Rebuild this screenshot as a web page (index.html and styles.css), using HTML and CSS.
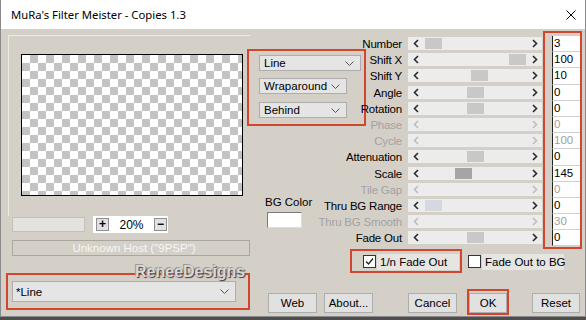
FILE: index.html
```html
<!DOCTYPE html>
<html>
<head>
<meta charset="utf-8">
<link rel="stylesheet" href="styles.css">
</head>
<body>
<div class="window">
  <div class="titlebar">
    <span class="title">MuRa's Filter Meister - Copies 1.3</span>
    <svg class="close" viewBox="0 0 10 10"><path d="M0.5 0.5 L9.5 9.5 M9.5 0.5 L0.5 9.5" stroke="#000" stroke-width="1"/></svg>
  </div>
  <div class="client">
    <div class="left">
      <div class="preview-group"><div class="preview"></div></div>
      <div class="zoom-row">
        <div class="zoom-field"></div>
        <div class="zoom-ctl">
          <span class="zbtn">+</span>
          <span class="zval">20%</span>
          <span class="zbtn">&minus;</span>
        </div>
      </div>
      <div class="host">Unknown Host ("9PSP")</div>
      <div class="preset red">
        <div class="combo wide"><span>*Line</span><svg class="chev" viewBox="0 0 9 5"><polyline points="0.5,0.5 4.5,4.5 8.5,0.5" fill="none" stroke="#555" stroke-width="1"/></svg></div>
      </div>
      <div class="watermark">ReneeDesigns</div>
    </div>
    <div class="right">
      <div class="top">
        <div class="side">
          <div class="ddgroup red">
            <div class="combo line"><span>Line</span><svg class="chev" viewBox="0 0 9 5"><polyline points="0.5,0.5 4.5,4.5 8.5,0.5" fill="none" stroke="#555" stroke-width="1"/></svg></div>
            <div class="combo short"><span>Wraparound</span><svg class="chev" viewBox="0 0 9 5"><polyline points="0.5,0.5 4.5,4.5 8.5,0.5" fill="none" stroke="#555" stroke-width="1"/></svg></div>
            <div class="combo short gap8"><span>Behind</span><svg class="chev" viewBox="0 0 9 5"><polyline points="0.5,0.5 4.5,4.5 8.5,0.5" fill="none" stroke="#555" stroke-width="1"/></svg></div>
          </div>
          <div class="bg-label">BG Color</div>
          <div class="swatch"></div>
        </div>
        <div class="sliders">
          <div class="lab-col">
            <div class="lbl">Number</div>
            <div class="lbl">Shift X</div>
            <div class="lbl">Shift Y</div>
            <div class="lbl">Angle</div>
            <div class="lbl">Rotation</div>
            <div class="lbl dis">Phase</div>
            <div class="lbl dis">Cycle</div>
            <div class="lbl">Attenuation</div>
            <div class="lbl">Scale</div>
            <div class="lbl dis">Tile Gap</div>
            <div class="lbl">Thru BG Range</div>
            <div class="lbl dis">Thru BG Smooth</div>
            <div class="lbl">Fade Out</div>
          </div>
          <div class="track-col">
            <div class="trow"><div class="track"><svg class="arr" viewBox="0 0 6 9"><polyline points="5,1 1.5,4.5 5,8"/></svg><span class="thumb" style="left:17px"></span><svg class="arr" viewBox="0 0 6 9"><polyline points="1,1 4.5,4.5 1,8"/></svg></div></div>
            <div class="trow"><div class="track"><svg class="arr" viewBox="0 0 6 9"><polyline points="5,1 1.5,4.5 5,8"/></svg><span class="thumb" style="left:101px"></span><svg class="arr" viewBox="0 0 6 9"><polyline points="1,1 4.5,4.5 1,8"/></svg></div></div>
            <div class="trow"><div class="track"><svg class="arr" viewBox="0 0 6 9"><polyline points="5,1 1.5,4.5 5,8"/></svg><span class="thumb" style="left:63px"></span><svg class="arr" viewBox="0 0 6 9"><polyline points="1,1 4.5,4.5 1,8"/></svg></div></div>
            <div class="trow"><div class="track"><svg class="arr" viewBox="0 0 6 9"><polyline points="5,1 1.5,4.5 5,8"/></svg><span class="thumb" style="left:59px"></span><svg class="arr" viewBox="0 0 6 9"><polyline points="1,1 4.5,4.5 1,8"/></svg></div></div>
            <div class="trow"><div class="track"><svg class="arr" viewBox="0 0 6 9"><polyline points="5,1 1.5,4.5 5,8"/></svg><span class="thumb" style="left:59px"></span><svg class="arr" viewBox="0 0 6 9"><polyline points="1,1 4.5,4.5 1,8"/></svg></div></div>
            <div class="trow"><div class="track dis"><svg class="arr" viewBox="0 0 6 9"><polyline points="5,1 1.5,4.5 5,8"/></svg><svg class="arr" viewBox="0 0 6 9"><polyline points="1,1 4.5,4.5 1,8"/></svg></div></div>
            <div class="trow"><div class="track dis"><svg class="arr" viewBox="0 0 6 9"><polyline points="5,1 1.5,4.5 5,8"/></svg><svg class="arr" viewBox="0 0 6 9"><polyline points="1,1 4.5,4.5 1,8"/></svg></div></div>
            <div class="trow"><div class="track"><svg class="arr" viewBox="0 0 6 9"><polyline points="5,1 1.5,4.5 5,8"/></svg><span class="thumb" style="left:59px"></span><svg class="arr" viewBox="0 0 6 9"><polyline points="1,1 4.5,4.5 1,8"/></svg></div></div>
            <div class="trow"><div class="track"><svg class="arr" viewBox="0 0 6 9"><polyline points="5,1 1.5,4.5 5,8"/></svg><span class="thumb dark" style="left:47px"></span><svg class="arr" viewBox="0 0 6 9"><polyline points="1,1 4.5,4.5 1,8"/></svg></div></div>
            <div class="trow"><div class="track dis"><svg class="arr" viewBox="0 0 6 9"><polyline points="5,1 1.5,4.5 5,8"/></svg><svg class="arr" viewBox="0 0 6 9"><polyline points="1,1 4.5,4.5 1,8"/></svg></div></div>
            <div class="trow"><div class="track"><svg class="arr" viewBox="0 0 6 9"><polyline points="5,1 1.5,4.5 5,8"/></svg><span class="thumb light" style="left:17px"></span><svg class="arr" viewBox="0 0 6 9"><polyline points="1,1 4.5,4.5 1,8"/></svg></div></div>
            <div class="trow"><div class="track dis"><svg class="arr" viewBox="0 0 6 9"><polyline points="5,1 1.5,4.5 5,8"/></svg><svg class="arr" viewBox="0 0 6 9"><polyline points="1,1 4.5,4.5 1,8"/></svg></div></div>
            <div class="trow"><div class="track"><svg class="arr" viewBox="0 0 6 9"><polyline points="5,1 1.5,4.5 5,8"/></svg><span class="thumb" style="left:59px"></span><svg class="arr" viewBox="0 0 6 9"><polyline points="1,1 4.5,4.5 1,8"/></svg></div></div>
          </div>
          <div class="val-frame red">
            <div class="val">3</div>
            <div class="val">100</div>
            <div class="val">10</div>
            <div class="val">0</div>
            <div class="val">0</div>
            <div class="val dis">0</div>
            <div class="val dis">100</div>
            <div class="val">0</div>
            <div class="val">145</div>
            <div class="val dis">0</div>
            <div class="val">0</div>
            <div class="val dis">30</div>
            <div class="val">0</div>
          </div>
        </div>
      </div>
      <div class="checks">
        <div class="chk-box red">
          <span class="cb"><svg viewBox="0 0 11 11"><polyline points="2,5.5 4.5,8 9,2.5" fill="none" stroke="#222" stroke-width="1.3"/></svg></span>
          <span class="cb-label">1/n Fade Out</span>
        </div>
        <div class="chk-plain">
          <span class="cb"></span>
          <span class="cb-label">Fade Out to BG</span>
        </div>
      </div>
      <div class="buttons">
        <button class="btn web">Web</button>
        <button class="btn about">About...</button>
        <button class="btn cancel">Cancel</button>
        <div class="ok-wrap red"><button class="btn ok">OK</button></div>
        <button class="btn reset">Reset</button>
      </div>
    </div>
  </div>
</div>
</body>
</html>
```
FILE: styles.css
```css
* { box-sizing: border-box; margin: 0; padding: 0; }
body {
  margin: 0;
  width: 586px;
  height: 320px;
  overflow: hidden;
  background: #4e4e4e;
  font-family: "Liberation Sans", Arial, sans-serif;
  font-size: 11px;
  color: #000;
}
.window {
  width: 586px;
  height: 317px;
  background: #d4d0c8;
  border-left: 1px solid #8a8a8a;
  border-right: 1px solid #8a8a8a;
  border-bottom: 1px solid #8a8a8a;
  display: flex;
  flex-direction: column;
}
.titlebar {
  height: 29px;
  flex: none;
  background: #fff;
  display: flex;
  align-items: center;
  justify-content: space-between;
  padding: 0 9px 0 10px;
}
.title { font-family: "Noto Sans", sans-serif; font-size: 11.3px; }
.close { width: 10px; height: 10px; }
.client { display: flex; flex: 1; }
.red { border: 2px solid #d2452f; }

/* left column */
.left { width: 249px; flex: none; position: relative; display: flex; flex-direction: column; }
.preview-group {
  margin: 6px 0 0 7px;
  height: 181px;
  border-top: 1px solid #ebe9e4;
  border-left: 1px solid #ebe9e4;
  padding: 18px 0 0 12px;
}
.preview {
  width: 222px;
  height: 142px;
  border: 1px solid #000;
  background-color: #fff;
  background-image: conic-gradient(#c3c3c3 25%, #fff 0 50%, #c3c3c3 0 75%, #fff 0);
  background-size: 16px 16px;
}
.zoom-row { display: flex; align-items: center; margin-left: 11px; height: 17px; }
.zoom-field { width: 73px; height: 15px; background: #e4e2de; border: 1px solid #c4c1ba; }
.zoom-ctl {
  margin-left: 8px; width: 75px; height: 17px; background: #fff;
  display: flex; align-items: center; padding: 0 1px 0 3px;
}
.zbtn {
  width: 13px; height: 13px; background: #e1e1e1; border: 1px solid #8f8f8f;
  font-weight: bold; font-size: 12px; line-height: 10px; text-align: center;
}
.zval { flex: 1; text-align: center; font-size: 12px; }
.host {
  margin: 7px 0 0 11px; width: 238px; height: 16px;
  border: 1px solid #aaa7a0; color: #f6f6f6;
  text-align: center; line-height: 14px; padding-left: 6px; font-size: 11.5px;
}
.preset { margin: 17px 0 0 5px; width: 244px; height: 37px; padding: 6px 0 0 4px; }
.combo {
  display: flex; align-items: center; justify-content: space-between;
  background: #e5e5e5; border: 1px solid #adadad; padding: 0 6px 0 4px;
  font-size: 11.5px;
}
.combo.wide { width: 224px; height: 21px; padding-left: 3px; }
.chev { width: 9px; height: 5px; }
.watermark {
  position: absolute; left: 134px; top: 234px;
  font-weight: bold; font-size: 16px;
  color: #d9d9d9;
  text-shadow: 1px 1px 1px #3c3c3c, -1px -1px 0 #9a9a9a;
}

/* right column */
.right { flex: 1; display: flex; flex-direction: column; }
.top { display: grid; grid-template: auto / 1fr; }
.top > * { grid-area: 1 / 1; }
.side { display: flex; flex-direction: column; align-items: flex-start; }
.ddgroup {
  margin: 20px 0 0 -3px; width: 119px; height: 77px;
  padding: 4px 0 0 10px; display: flex; flex-direction: column;
}
.combo.line { width: 102px; height: 16px; }
.combo.short { width: 88px; height: 16px; margin-top: 7px; }
.combo.short.gap8 { margin-top: 8px; }
.bg-label { margin: 69px 0 0 15px; line-height: 14px; font-size: 11.5px; }
.swatch {
  margin: 3px 0 0 17px; width: 35px; height: 16px; background: #fff;
  border: 1px solid; border-color: #7a7a7a #dcdcdc #dcdcdc #7a7a7a;
}
.sliders { display: flex; margin-top: 7px; align-items: flex-start; }
.lab-col { width: 158px; display: flex; flex-direction: column; }
.lbl {
  height: 16.2px; line-height: 16.2px; text-align: right; padding-right: 6px;
  white-space: nowrap; font-size: 11.5px; letter-spacing: -0.2px;
}
.dis { color: #a2a2a2; }
.track-col { width: 134px; display: flex; flex-direction: column; }
.trow { height: 16.2px; padding-top: 1px; }
.track {
  position: relative; height: 13px; background: #ececec;
  display: flex; align-items: center; justify-content: space-between; padding: 0 4px 0 5px;
}
.arr { width: 6px; height: 9px; }
.arr polyline { fill: none; stroke: #2a2a2a; stroke-width: 1.6; }
.track.dis .arr polyline { stroke: #bdbdbd; }
.thumb { position: absolute; top: 1px; width: 17px; height: 11px; background: #c8c8c8; }
.thumb.dark { background: #a5a5a5; }
.thumb.light { background: #d5d8de; }
.val-frame {
  margin: -5px 0 0 1px; width: 39px; height: 218px;
  padding: 3px 0 0 7px; display: flex; flex-direction: column;
}
.val {
  width: 28px; height: 16.2px; background: #fff;
  border-left: 1px solid #222; border-bottom: 1px solid #d0d0d0;
  padding-left: 1px; line-height: 15px; font-size: 11.5px;
}
.val.dis { color: #a0a0a0; }

.checks { display: flex; align-items: center; height: 24px; }
.chk-box {
  margin-left: 100px; width: 112px; height: 24px;
  display: flex; align-items: center; padding: 1px 0 0 11px;
}
.chk-plain { margin-left: 6px; display: flex; align-items: center; padding-top: 1px; }
.cb {
  flex: none;
  width: 13px; height: 13px; background: #fff; border: 1px solid #333;
  display: flex; align-items: center; justify-content: center;
}
.cb svg { width: 11px; height: 11px; }
.cb-label {
  margin-left: 1px; background: #e6e5e2; padding: 0 2px 0 3px; height: 16px; line-height: 16px;
  white-space: nowrap; font-size: 11.5px; width: 82px;
}

.buttons { display: flex; align-items: flex-start; margin-top: 16px; }
.btn {
  font-family: "Liberation Sans", Arial, sans-serif; font-size: 11.5px;
  height: 20px; width: 49px; background: #e1e1e1; border: 1px solid #adadad; color: #000;
  margin-top: 4px;
}
.web { margin-left: 18px; }
.about { margin-left: 7px; }
.cancel { margin-left: 35px; }
.ok-wrap { margin-left: 10px; width: 42px; height: 26px; padding: 2px 0 0 0; display: flex; justify-content: center; }
.btn.ok { width: 38px; margin-top: 0; }
.reset { margin-left: 23px; width: 48px; }
```
